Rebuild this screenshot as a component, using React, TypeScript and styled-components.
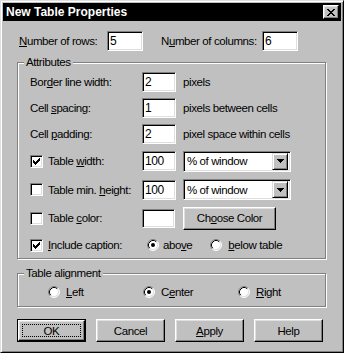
import React from "react";
import styled, { createGlobalStyle } from "styled-components";

const Global = createGlobalStyle`
  html, body { margin: 0; padding: 0; background: #c0c0c0; }
  body {
    font-family: "Liberation Sans", Arial, sans-serif;
    font-size: 11.5px;
    letter-spacing: -0.4px;
    color: #000;
  }
  * { box-sizing: border-box; }
`;

const Window = styled.div`
  width: 344px;
  height: 353px;
  background: #c0c0c0;
  border: 1px solid;
  border-color: #dfdfdf #000 #000 #dfdfdf;
  box-shadow: inset 1px 1px #fff, inset -1px -1px #808080;
  padding: 2px;
  display: flex;
  flex-direction: column;
`;

const TitleBar = styled.div`
  height: 18px;
  background: #000;
  display: flex;
  align-items: center;
  justify-content: space-between;
  padding: 0 2px 0 3px;
`;

const TitleText = styled.span`
  font-family: "Liberation Sans", Arial, sans-serif;
  font-weight: bold;
  font-size: 12px;
  letter-spacing: 0;
  color: #fff;
`;

const RaisedButton = styled.button<{ $w: number; $h: number }>`
  width: ${(p) => p.$w}px;
  height: ${(p) => p.$h}px;
  padding: 0;
  margin: 0;
  background: #c0c0c0;
  border: 1px solid;
  border-color: #fff #000 #000 #fff;
  box-shadow: inset -1px -1px #808080, inset 1px 1px #dfdfdf;
  font: inherit;
  letter-spacing: inherit;
  color: #000;
  display: flex;
  align-items: center;
  justify-content: center;
`;

const DefaultFrame = styled.div`
  border: 1px solid #000;
  display: flex;
`;

const FocusRing = styled.span`
  display: flex;
  align-items: center;
  justify-content: center;
  width: calc(100% - 6px);
  height: calc(100% - 6px);
  border: 1px dotted #000;
`;

const Content = styled.div`
  display: flex;
  flex-direction: column;
  padding: 0 15px 0 14px;
`;

const TopRow = styled.div`
  margin-top: 10px;
  height: 20px;
  display: flex;
  align-items: center;
  padding-left: 2px;
`;

const FixedLabel = styled.span<{ $w: number; $ml?: number }>`
  width: ${(p) => p.$w}px;
  margin-left: ${(p) => p.$ml ?? 0}px;
  white-space: nowrap;
`;

const Key = styled.span`
  text-decoration: underline;
  text-underline-offset: 1px;
`;

const TextBox = styled.div<{ $w?: number; $h?: number }>`
  width: ${(p) => p.$w ?? 34}px;
  height: ${(p) => p.$h ?? 20}px;
  background: #fff;
  border: 1px solid;
  border-color: #808080 #fff #fff #808080;
  box-shadow: inset 1px 1px #000, inset -1px -1px #dfdfdf;
  padding: 0 0 0 2px;
  display: flex;
  align-items: center;
  line-height: 1;
  font-size: 12px;
`;

const GroupBox = styled.div<{ $mt: number }>`
  position: relative;
  margin-top: ${(p) => p.$mt}px;
  border: 1px solid #808080;
  box-shadow: inset 1px 1px #fff, 1px 1px 0 #fff;
`;

const Legend = styled.span`
  position: absolute;
  top: -8px;
  left: 6px;
  line-height: 15px;
  padding: 0 2px;
  background: #c0c0c0;
`;

const AttrGrid = styled.div`
  display: grid;
  grid-template-columns: 105px 34px 1fr;
  grid-template-rows: 26px 26px 26px 28px 29px 28px 26px;
  column-gap: 7px;
  align-items: center;
  padding: 6px 0 0 12px;
`;

const CellText = styled.span`
  white-space: nowrap;
`;

const CheckLabel = styled.label`
  display: flex;
  align-items: center;
  gap: 5px;
  white-space: nowrap;
`;

const CheckBoxBox = styled.span`
  width: 13px;
  height: 13px;
  background: #fff;
  border: 1px solid;
  border-color: #808080 #fff #fff #808080;
  box-shadow: inset 1px 1px #000, inset -1px -1px #dfdfdf;
  display: flex;
  align-items: center;
  justify-content: center;
  flex: none;
`;

const SelectBox = styled.div`
  width: 108px;
  height: 21px;
  background: #fff;
  border: 1px solid;
  border-color: #808080 #fff #fff #808080;
  box-shadow: inset 1px 1px #000, inset -1px -1px #dfdfdf;
  padding: 2px;
  display: flex;
  align-items: center;
  justify-content: space-between;
`;

const SelectText = styled.span`
  padding-left: 1px;
  white-space: nowrap;
`;

const DropButton = styled.span`
  width: 16px;
  height: 17px;
  background: #c0c0c0;
  border: 1px solid;
  border-color: #dfdfdf #000 #000 #dfdfdf;
  box-shadow: inset 1px 1px #fff, inset -1px -1px #808080;
  display: flex;
  align-items: center;
  justify-content: center;
`;

const RadioRow = styled.div`
  grid-column: 2 / 4;
  display: flex;
  align-items: center;
  gap: 18px;
  padding-left: 5px;
`;

const RadioItem = styled.label<{ $gap?: number }>`
  display: flex;
  align-items: center;
  gap: ${(p) => p.$gap ?? 4}px;
  white-space: nowrap;
`;

const AlignRow = styled.div`
  display: grid;
  grid-template-columns: 95px 95px 1fr;
  align-items: center;
  height: 16px;
  margin: 10px 0 6px 30px;
`;

const ButtonRow = styled.div`
  margin-top: 12px;
  display: flex;
  gap: 10px;
`;

const CheckMark = () => (
  <svg width="7" height="7" viewBox="0 0 7 7" shapeRendering="crispEdges">
    <path
      fill="#000"
      d="M6 0h1v1h-1z M5 1h2v1h-2z M0 2h1v1h-1z M4 2h3v1h-3z M0 3h2v1h-2z M3 3h3v1h-3z M0 4h5v1h-5z M1 5h3v1h-3z M2 6h1v1h-1z"
    />
  </svg>
);

const CheckBox = ({ checked }: { checked?: boolean }) => (
  <CheckBoxBox>{checked && <CheckMark />}</CheckBoxBox>
);

const Radio = ({ checked }: { checked?: boolean }) => (
  <svg width="12" height="12" viewBox="0 0 12 12" style={{ flex: "none" }}>
    <circle cx="6" cy="6" r="5" fill="#fff" />
    <path d="M2.11 9.89 A5.5 5.5 0 0 1 9.89 2.11" stroke="#808080" fill="none" />
    <path d="M9.89 2.11 A5.5 5.5 0 0 1 2.11 9.89" stroke="#fff" fill="none" />
    <path d="M2.82 9.18 A4.5 4.5 0 0 1 9.18 2.82" stroke="#000" fill="none" />
    <path d="M9.18 2.82 A4.5 4.5 0 0 1 2.82 9.18" stroke="#dfdfdf" fill="none" />
    {checked && <circle cx="6" cy="6" r="2" fill="#000" />}
  </svg>
);

const CloseGlyph = () => (
  <svg width="8" height="7" viewBox="0 0 8 7" shapeRendering="crispEdges">
    <path
      fill="#000"
      d="M0 0h2v1h-2z M6 0h2v1h-2z M1 1h2v1h-2z M5 1h2v1h-2z M2 2h4v1h-4z M3 3h2v1h-2z M2 4h4v1h-4z M1 5h2v1h-2z M5 5h2v1h-2z M0 6h2v1h-2z M6 6h2v1h-2z"
    />
  </svg>
);

const DownArrow = () => (
  <svg width="7" height="4" viewBox="0 0 7 4" shapeRendering="crispEdges">
    <path fill="#000" d="M0 0h7v1h-7z M1 1h5v1h-5z M2 2h3v1h-3z M3 3h1v1h-1z" />
  </svg>
);

export default function App() {
  return (
    <>
      <Global />
      <Window>
        <TitleBar>
          <TitleText>New Table Properties</TitleText>
          <RaisedButton $w={16} $h={14}>
            <CloseGlyph />
          </RaisedButton>
        </TitleBar>
        <Content>
          <TopRow>
            <FixedLabel $w={88}>
              <Key>N</Key>umber of rows:
            </FixedLabel>
            <TextBox $w={36}>5</TextBox>
            <FixedLabel $w={101} $ml={18}>
              N<Key>u</Key>mber of columns:
            </FixedLabel>
            <TextBox $w={36}>6</TextBox>
          </TopRow>

          <GroupBox $mt={11}>
            <Legend>Attributes</Legend>
            <AttrGrid>
              <CellText>
                Bor<Key>d</Key>er line width:
              </CellText>
              <TextBox>2</TextBox>
              <CellText>pixels</CellText>

              <CellText>
                Cell <Key>s</Key>pacing:
              </CellText>
              <TextBox>1</TextBox>
              <CellText>pixels between cells</CellText>

              <CellText>
                Cell <Key>p</Key>adding:
              </CellText>
              <TextBox>2</TextBox>
              <CellText>pixel space within cells</CellText>

              <CheckLabel>
                <CheckBox checked />
                <span>
                  Table <Key>w</Key>idth:
                </span>
              </CheckLabel>
              <TextBox>100</TextBox>
              <SelectBox>
                <SelectText>% of window</SelectText>
                <DropButton>
                  <DownArrow />
                </DropButton>
              </SelectBox>

              <CheckLabel>
                <CheckBox />
                <span>
                  Table min. <Key>h</Key>eight:
                </span>
              </CheckLabel>
              <TextBox>100</TextBox>
              <SelectBox>
                <SelectText>% of window</SelectText>
                <DropButton>
                  <DownArrow />
                </DropButton>
              </SelectBox>

              <CheckLabel>
                <CheckBox />
                <span>
                  Table <Key>c</Key>olor:
                </span>
              </CheckLabel>
              <TextBox $w={33} $h={19} />
              <RaisedButton $w={93} $h={23}>
                <span>
                  Ch<Key>o</Key>ose Color
                </span>
              </RaisedButton>

              <CheckLabel>
                <CheckBox checked />
                <span>
                  <Key>I</Key>nclude caption:
                </span>
              </CheckLabel>
              <RadioRow>
                <RadioItem>
                  <Radio checked />
                  <span>
                    abo<Key>v</Key>e
                  </span>
                </RadioItem>
                <RadioItem $gap={6}>
                  <Radio />
                  <span>
                    <Key>b</Key>elow table
                  </span>
                </RadioItem>
              </RadioRow>
            </AttrGrid>
          </GroupBox>

          <GroupBox $mt={14}>
            <Legend>Table alignment</Legend>
            <AlignRow>
              <RadioItem $gap={6}>
                <Radio />
                <span>
                  <Key>L</Key>eft
                </span>
              </RadioItem>
              <RadioItem $gap={6}>
                <Radio checked />
                <span>
                  C<Key>e</Key>nter
                </span>
              </RadioItem>
              <RadioItem $gap={6}>
                <Radio />
                <span>
                  <Key>R</Key>ight
                </span>
              </RadioItem>
            </AlignRow>
          </GroupBox>

          <ButtonRow>
            <DefaultFrame>
              <RaisedButton $w={67} $h={21}>
                <FocusRing>OK</FocusRing>
              </RaisedButton>
            </DefaultFrame>
            <RaisedButton $w={69} $h={23}>Cancel</RaisedButton>
            <RaisedButton $w={69} $h={23}>
              <span>
                <Key>A</Key>pply
              </span>
            </RaisedButton>
            <RaisedButton $w={69} $h={23}>Help</RaisedButton>
          </ButtonRow>
        </Content>
      </Window>
    </>
  );
}
